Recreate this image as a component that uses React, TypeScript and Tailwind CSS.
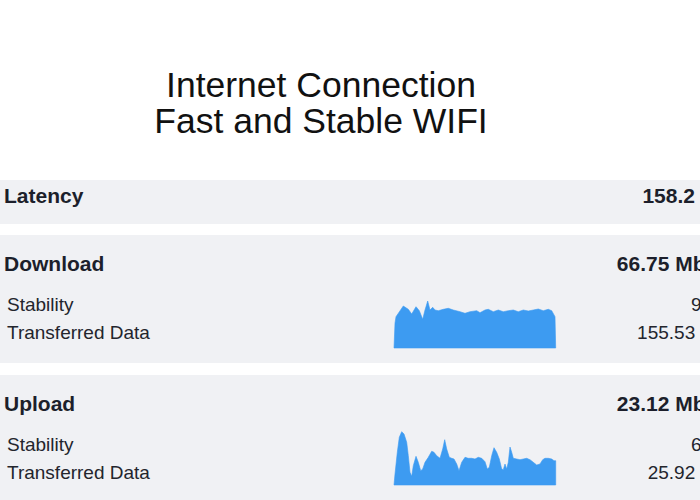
const downloadPts =
  "1,48 2,23 3,16.7 10.3,6 15.3,9.3 18.7,14 23,6.7 26.3,10.7 29.7,19.3 32,10 34.7,1 37,10 39.7,7.3 42,10 45.3,10.7 50.3,9.3 55.3,8.3 60.3,10 67,11.7 72,13.3 77,11.7 83.7,10.7 87,12.7 92,10 95.3,9.3 100.3,11.7 105.3,10 110.3,11.7 115.3,10.7 120.3,10 125.3,11.7 130.3,10 135.3,11 140.3,10 145.3,9 150.3,10.7 155.3,9.3 158.7,10.7 162,16.7 162.7,48";

const uploadPts =
  "1,54 2,43 4.3,21.3 6.3,6.3 8.7,0.7 11,3 13.7,11.3 15.3,24.7 17,41.3 18.7,45.3 20.3,34.7 23,25.3 25.3,31.3 27.7,39.7 29.7,38 32,31.3 35.3,26.3 38.7,20.3 41,21.3 43.7,24.7 47,27.3 49.7,18 51.7,8.7 53.7,18 56.3,26.3 58.7,27.3 61,28 63.7,33 66,39.7 68.7,31.3 72,26.3 75.3,27.3 78.7,27.3 82,28 85.3,26.3 88.7,27.3 92,30.7 94.3,38 96.3,36.3 98.7,24.7 101,16.7 103.7,21.3 106.3,28 108.7,38 110.3,38.7 112,33 113.7,38 115.3,31.3 117,16 118.7,21.3 120.3,27.3 123.7,28 127,28.7 130.3,28 133.7,27.3 137,28.7 140.3,31.3 143.7,34 147,33 149.7,28.7 152,27.3 155.3,27.3 158.7,28 161,29.7 162.7,29.7 162.7,54";

function Sparkline({ points, height }: { points: string; height: number }) {
  return (
    <svg width={164} height={height} viewBox={`0 0 164 ${height}`} className="block">
      <polygon points={points} fill="#3d9bf1" strokeLinejoin="round" stroke="#3d9bf1" strokeWidth={0.6} />
    </svg>
  );
}

interface SpeedProps {
  title: string;
  value: string;
  stability: string;
  transferred: string;
  points: string;
  chartHeight: number;
  chartMt: string;
}

function SpeedSection({ title, value, stability, transferred, points, chartHeight, chartMt }: SpeedProps) {
  return (
    <div className="bg-[#f0f1f4] pt-[16px] pb-[14px] pl-[4px]">
      <div className="flex justify-between text-[21px] font-bold leading-[25px] text-[#1c1f2b]">
        <span>{title}</span>
        <span>{value}</span>
      </div>
      <div className="grid grid-cols-[389px_164px_1fr] mt-[15px] text-[19px] leading-[28px] text-[#23252d]">
        <div className="pl-[3px]">
          <div>Stability</div>
          <div>Transferred Data</div>
        </div>
        <div className={chartMt}>
          <Sparkline points={points} height={chartHeight} />
        </div>
        <div className="text-right pr-[1px]">
          <div>{stability}</div>
          <div>{transferred}</div>
        </div>
      </div>
    </div>
  );
}

export default function App() {
  return (
    <div className="w-[700px] h-[500px] overflow-hidden bg-white font-['Liberation_Sans',Arial,sans-serif]">
      <div className="w-[730px]">
        <div className="w-[642px] pt-[67px] text-center text-[35.5px] leading-[36px] text-[#111111]">
          <div>Internet Connection</div>
          <div>Fast and Stable WIFI</div>
        </div>

        <div className="mt-[41px] h-[44px] bg-[#f0f1f4] pt-[3px] pl-[4px] pr-[35px] flex justify-between text-[21px] font-bold leading-[25px] text-[#1c1f2b]">
          <span>Latency</span>
          <span>158.2</span>
        </div>

        <div className="mt-[11px] flex flex-col gap-[12px]">
          <SpeedSection
            title="Download"
            value="66.75 Mbps"
            stability="98%"
            transferred="155.53 MB"
            points={downloadPts}
            chartHeight={49}
            chartMt="mt-[9px]"
          />
          <SpeedSection
            title="Upload"
            value="23.12 Mbps"
            stability="64%"
            transferred="25.92 MB"
            points={uploadPts}
            chartHeight={55}
            chartMt="mt-[0px]"
          />
        </div>
      </div>
    </div>
  );
}
